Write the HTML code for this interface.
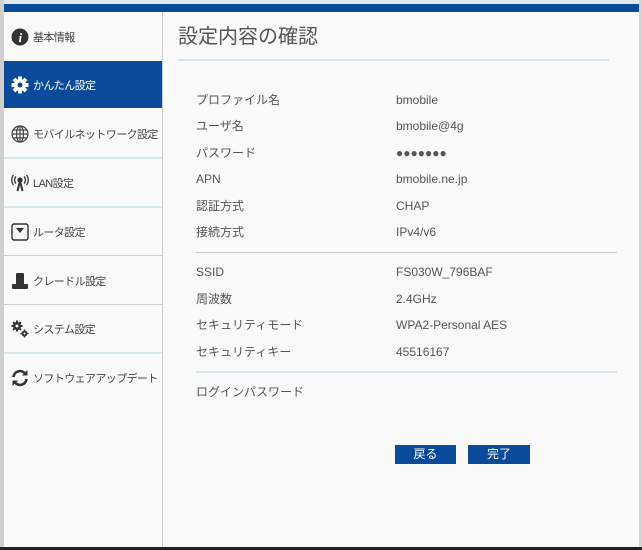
<!DOCTYPE html>
<html><head><meta charset="utf-8"><style>
body{margin:0;width:642px;height:550px;overflow:hidden;background:#f9f9f9;font-family:"Liberation Sans","Noto Sans CJK JP",sans-serif;position:relative}
.ls{position:absolute;left:0;top:0;width:4px;height:550px;background:#cfcfcf}
.rs{position:absolute;right:0;top:0;width:3px;height:550px;background:#d4d4d4}
.top{position:absolute;left:4px;top:0;width:635px;height:4px;background:#dfe8ef}
.bar{position:absolute;left:4px;top:4px;width:635px;height:8px;background:#0a4a9a}
.bot{position:absolute;left:0;top:547px;width:642px;height:3px;background:#222}
.side{position:absolute;left:4px;top:12px;width:158px;height:535px;border-right:1px solid #ccc;background:#f9f9f9}
.it{position:absolute;left:0;width:158px;height:47px;font-size:11px;color:#444;display:flex;align-items:center;white-space:nowrap;letter-spacing:-0.6px}
.it svg{margin-left:7px;margin-right:4px;flex:none}
.act{background:#0a4a9a;color:#fff}
.sep{position:absolute;left:0;width:158px;height:2px;background:#d8e6ee}
.sepg{position:absolute;left:0;width:158px;height:1px;background:#ccc}
h1{position:absolute;left:178px;top:20px;margin:0;font-size:20px;font-weight:normal;color:#555}
.ul{position:absolute;left:178px;top:59px;width:431px;height:2px;background:#d6e6ee}
.r{position:absolute;font-size:12px;color:#555;line-height:14px;height:14px}
.l{left:196px}.v{left:396px}
.hl{position:absolute;left:196px;width:421px}
.btn{position:absolute;top:445px;height:19px;background:#0a4a9a;color:#fff;font-size:12px;text-align:center;line-height:19px}
</style></head><body>
<div class="ls"></div><div class="rs"></div><div class="top"></div><div class="bar"></div>
<div class="side">
<div class="it" style="top:1px"><svg width="18" height="18"><circle cx="9" cy="9" r="8.5" fill="#333"/><text x="9" y="14" font-size="13" font-style="italic" font-weight="bold" fill="#fff" text-anchor="middle" font-family="Liberation Serif">i</text></svg>基本情報</div>
<div class="it act" style="top:49px"><svg width="18" height="18" viewBox="0 0 18 18"><g fill="#fff"><circle cx="9" cy="9" r="6"/><rect x="7" y="0.5" width="4" height="17"/><rect x="0.5" y="7" width="17" height="4"/><rect x="7" y="0.5" width="4" height="17" transform="rotate(45 9 9)"/><rect x="7" y="0.5" width="4" height="17" transform="rotate(-45 9 9)"/></g><circle cx="9" cy="9" r="2.5" fill="#0a4a9a"/></svg>かんたん設定</div>
<div class="it" style="top:98px"><svg width="18" height="18" viewBox="0 0 18 18" fill="none" stroke="#444" stroke-width="1.2"><circle cx="9" cy="9" r="8"/><ellipse cx="9" cy="9" rx="3.5" ry="8"/><line x1="1" y1="9" x2="17" y2="9"/><line x1="9" y1="1" x2="9" y2="17"/><path d="M2.5 5h13M2.5 13h13"/></svg>モバイルネットワーク設定</div>
<div class="sep" style="top:145px"></div>
<div class="it" style="top:147px"><svg width="18" height="18" viewBox="0 0 18 18" fill="none" stroke="#333" stroke-width="1.3"><circle cx="9" cy="6" r="2" fill="#333"/><path d="M9 7 L6.5 17 M9 7 L11.5 17" stroke-width="2"/><path d="M5 2.5a5 5 0 0 0 0 7M13 2.5a5 5 0 0 1 0 7M2.5 1a8 8 0 0 0 0 10M15.5 1a8 8 0 0 1 0 10"/></svg>LAN設定</div>
<div class="sep" style="top:194px"></div>
<div class="it" style="top:196px"><svg width="18" height="18" viewBox="0 0 18 18"><rect x="1" y="1" width="16" height="16" rx="2" fill="none" stroke="#333" stroke-width="1.4"/><path d="M5 5h8l-4 5z" fill="#333"/></svg>ルータ設定</div>
<div class="sepg" style="top:243px"></div>
<div class="it" style="top:245px"><svg width="18" height="18" viewBox="0 0 18 18" fill="#333"><rect x="5" y="1" width="8" height="12" rx="1"/><rect x="1" y="12" width="16" height="5" rx="1"/></svg>クレードル設定</div>
<div class="sepg" style="top:292px"></div>
<div class="it" style="top:293px"><svg width="18" height="18" viewBox="0 0 18 18"><g fill="#333"><circle cx="6" cy="6" r="4"/><rect x="5" y="0.5" width="2" height="11"/><rect x="0.5" y="5" width="11" height="2"/><rect x="5" y="0.5" width="2" height="11" transform="rotate(45 6 6)"/><rect x="5" y="0.5" width="2" height="11" transform="rotate(-45 6 6)"/><circle cx="13.5" cy="13.5" r="3"/><rect x="12.8" y="9.5" width="1.4" height="8"/><rect x="9.5" y="12.8" width="8" height="1.4"/></g><circle cx="6" cy="6" r="1.5" fill="#f9f9f9"/><circle cx="13.5" cy="13.5" r="1" fill="#f9f9f9"/></svg>システム設定</div>
<div class="sep" style="top:340px"></div>
<div class="it" style="top:342px"><svg width="18" height="18" viewBox="0 0 18 18" fill="none" stroke="#333" stroke-width="2.6"><path d="M2.5 8a6.5 6.5 0 0 1 11.5-3.5"/><path d="M15.5 10a6.5 6.5 0 0 1-11.5 3.5"/><path d="M16.5 1v5.5h-5.5z" fill="#333" stroke="none"/><path d="M1.5 17v-5.5h5.5z" fill="#333" stroke="none"/></svg>ソフトウェアアップデート</div>
</div>
<h1>設定内容の確認</h1><div class="ul"></div>
<div class="r l" style="top:93px">プロファイル名</div><div class="r v" style="top:93px">bmobile</div>
<div class="r l" style="top:119px">ユーザ名</div><div class="r v" style="top:119px">bmobile@4g</div>
<div class="r l" style="top:146px">パスワード</div><div class="r v" style="top:146px">●●●●●●●</div>
<div class="r l" style="top:172px">APN</div><div class="r v" style="top:172px">bmobile.ne.jp</div>
<div class="r l" style="top:199px">認証方式</div><div class="r v" style="top:199px">CHAP</div>
<div class="r l" style="top:225px">接続方式</div><div class="r v" style="top:225px">IPv4/v6</div>
<div class="hl" style="top:252px;height:1px;background:#ccc"></div>
<div class="r l" style="top:265px">SSID</div><div class="r v" style="top:265px">FS030W_796BAF</div>
<div class="r l" style="top:292px">周波数</div><div class="r v" style="top:292px">2.4GHz</div>
<div class="r l" style="top:318px">セキュリティモード</div><div class="r v" style="top:318px">WPA2-Personal AES</div>
<div class="r l" style="top:345px">セキュリティキー</div><div class="r v" style="top:345px">45516167</div>
<div class="hl" style="top:371px;height:2px;background:#d6e6ee"></div>
<div class="r l" style="top:385px">ログインパスワード</div>
<div class="btn" style="left:395px;width:61px">戻る</div>
<div class="btn" style="left:468px;width:62px">完了</div>
<div class="bot"></div>
</body></html>
